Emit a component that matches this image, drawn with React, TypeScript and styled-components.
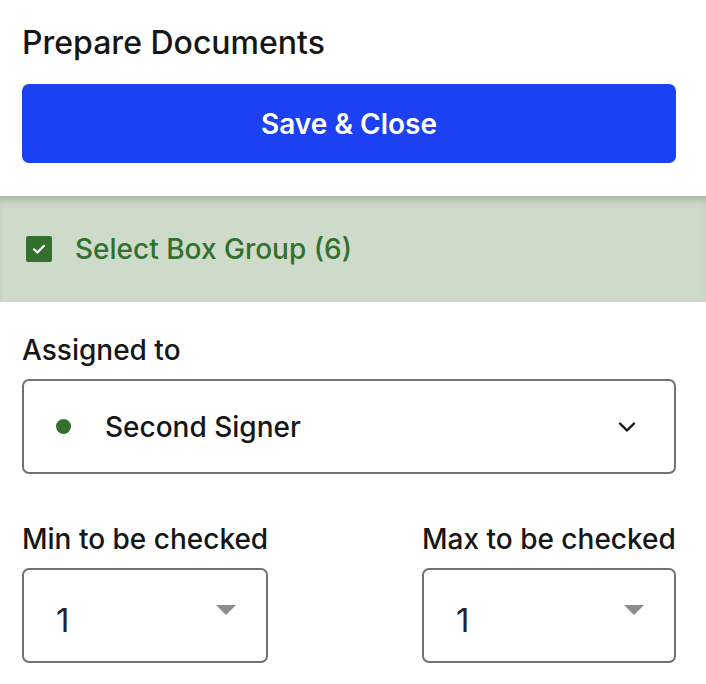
import styled, { createGlobalStyle } from 'styled-components'

const GlobalStyle = createGlobalStyle`
  html, body {
    margin: 0;
    padding: 0;
    background: #ffffff;
  }
  body {
    font-family: Inter, "Noto Sans", sans-serif;
    color: #1a1a1a;
  }
`

const Panel = styled.div`
  width: 706px;
  display: flex;
  flex-direction: column;
`

const Header = styled.div`
  padding: 24px 30px 33px 22px;
  display: flex;
  flex-direction: column;
  gap: 22px;
`

const Title = styled.h1`
  margin: 0;
  font-size: 32px;
  font-weight: 500;
  line-height: 38px;
  color: #161616;
`

const PrimaryButton = styled.button`
  height: 79px;
  border: none;
  border-radius: 7px;
  background: #1b41f2;
  color: #ffffff;
  font-family: inherit;
  font-size: 28px;
  font-weight: 600;
  cursor: pointer;
`

const GroupBar = styled.div`
  height: 106px;
  background: #cedbca;
  box-shadow: inset 0 8px 8px -4px rgba(0, 0, 0, 0.18);
  display: flex;
  align-items: center;
  gap: 23px;
  padding-left: 26px;
`

const CheckBox = styled.span`
  width: 26px;
  height: 26px;
  border-radius: 2px;
  background: #33702d;
  display: flex;
  align-items: center;
  justify-content: center;
`

const GroupLabel = styled.span`
  font-size: 28px;
  font-weight: 500;
  color: #33702d;
`

const Body = styled.div`
  padding: 30px 30px 20px 22px;
  display: flex;
  flex-direction: column;
`

const Label = styled.div`
  font-size: 28px;
  font-weight: 500;
  line-height: 36px;
  color: #161616;
  margin-bottom: 11px;
`

const Select = styled.div<{ $width?: number }>`
  box-sizing: border-box;
  height: 95px;
  width: ${(p) => (p.$width ? `${p.$width}px` : '100%')};
  border: 2px solid #727272;
  border-radius: 7px;
  display: flex;
  align-items: center;
  padding: 0 ${(p) => (p.$width ? '30px' : '38px')} 0 ${(p) => (p.$width ? '32px' : '32px')};
`

const Dot = styled.span`
  width: 15px;
  height: 15px;
  border-radius: 50%;
  background: #33702d;
  margin-right: 34px;
`

const SelectText = styled.span`
  flex: 1;
  font-size: 28px;
  font-weight: 500;
  color: #161616;
`

const NumberText = styled.span`
  flex: 1;
  font-size: 33px;
  font-weight: 400;
  color: #222222;
  padding-top: 8px;
`

const Caret = styled.span`
  width: 0;
  height: 0;
  border-left: 10px solid transparent;
  border-right: 10px solid transparent;
  border-top: 10px solid #8c8c8c;
  margin-bottom: 12px;
`

const Row = styled.div`
  display: flex;
  justify-content: space-between;
  margin-top: 47px;
`

const Field = styled.div`
  display: flex;
  flex-direction: column;
  align-items: flex-start;
`

export default function App() {
  return (
    <Panel>
      <GlobalStyle />
      <Header>
        <Title>Prepare Documents</Title>
        <PrimaryButton>Save &amp; Close</PrimaryButton>
      </Header>

      <GroupBar>
        <CheckBox>
          <svg width="16" height="16" viewBox="0 0 16 16">
            <path d="M3 8.3 L6.4 11.5 L13 4.8" fill="none" stroke="#ffffff" strokeWidth="2.2" strokeLinecap="round" strokeLinejoin="round" />
          </svg>
        </CheckBox>
        <GroupLabel>Select Box Group (6)</GroupLabel>
      </GroupBar>

      <Body>
        <Label>Assigned to</Label>
        <Select>
          <Dot />
          <SelectText>Second Signer</SelectText>
          <svg width="18" height="12" viewBox="0 0 18 12">
            <path d="M2 2.5 L9 9.5 L16 2.5" fill="none" stroke="#161616" strokeWidth="2.4" strokeLinecap="round" strokeLinejoin="round" />
          </svg>
        </Select>

        <Row>
          <Field>
            <Label>Min to be checked</Label>
            <Select $width={246}>
              <NumberText>1</NumberText>
              <Caret />
            </Select>
          </Field>
          <Field>
            <Label>Max to be checked</Label>
            <Select $width={254}>
              <NumberText>1</NumberText>
              <Caret />
            </Select>
          </Field>
        </Row>
      </Body>
    </Panel>
  )
}
